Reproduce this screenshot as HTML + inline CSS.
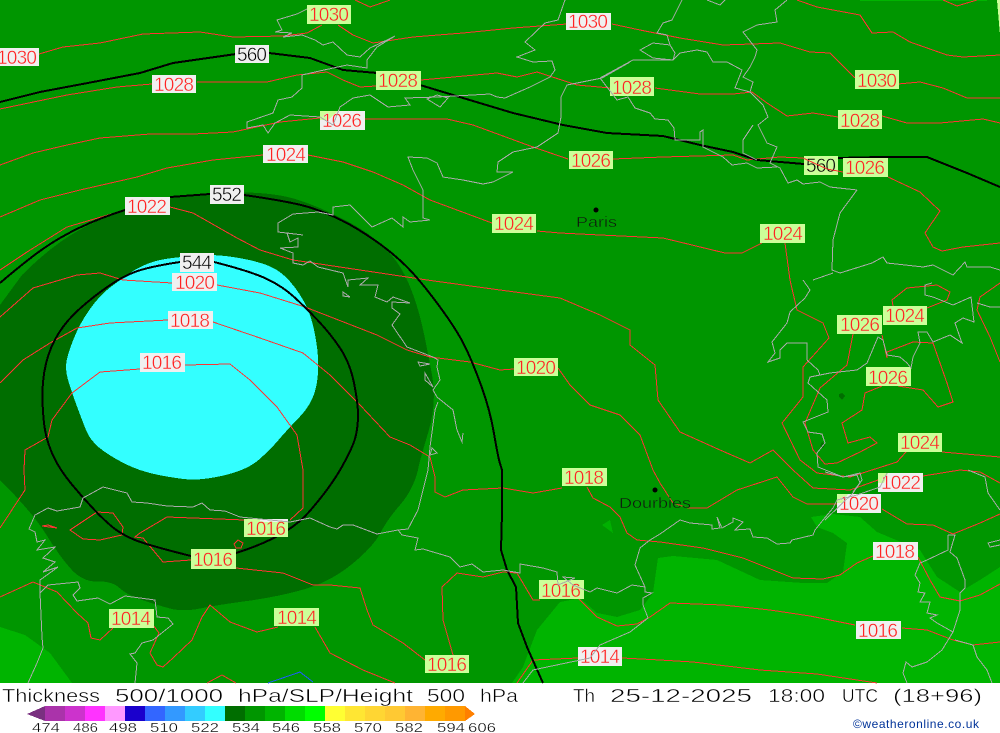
<!DOCTYPE html>
<html><head><meta charset="utf-8"><style>
html,body{margin:0;padding:0;background:#fff}
svg{display:block}
text{font-family:"Liberation Sans",sans-serif}
.r{fill:none;stroke:#ff3333;stroke-width:1}
.k{fill:none;stroke:#000;stroke-width:2}
.c{fill:none;stroke:#aaaaaa;stroke-width:1}
.lg{fill:#ccff99}.wh{fill:#f0f0f0}
.t text{font-size:19px;text-anchor:middle}
.tl text{fill:#ff2222;stroke:#ccff99;stroke-width:.4}
.tw text{fill:#ff2222;stroke:#f0f0f0;stroke-width:.4}
.bl text{fill:#000;stroke:#f0f0f0;stroke-width:.5}
.bg text{fill:#000;stroke:#ccff99;stroke-width:.5}
.title text{font-size:18px;fill:#000;stroke:#fff;stroke-width:.45}
.sc text{font-size:13px;fill:#000;stroke:#fff;stroke-width:.3}
</style></head><body>
<svg width="1000" height="733" viewBox="0 0 1000 733" xmlns="http://www.w3.org/2000/svg">
<rect width="1000" height="733" fill="#fff"/>
<rect width="1000" height="683" fill="#009600"/>
<g shape-rendering="crispEdges">
<path fill="#00b400" d="M512 683L523 667 537 630 560 602 580 598 597 613 617 617 640 610 653 593 658 558 673 556 717 560 760 580 803 583 827 583 843 572 847 543 833 533 817 527 811 517 833 514 860 517 877 532 920 550 937 577 960 592 980 580 1000 567V683Z"/>
<path fill="#00b400" d="M0 627L25 635 50 653 72 683H0Z"/>
<path fill="#00b400" d="M860 0H987V1H860Z"/>
<path fill="#ccff99" d="M997 0H1000V35Z"/>
<path fill="#00b000" d="M602 525L610 520 613 533Z"/>
<path fill="#006e00" d="M0 305L22 275Q50 247 75 232.5Q100 218 133.5 208Q167 198 190 195Q213 192 245 192.5Q277 193 298.5 200Q320 207 345 220Q370 233 385 248Q400 263 408.5 283Q417 303 422 325Q427 347 432 375Q437 403 428.5 431.5Q420 460 419 465L418 470Q413 490 400 505Q387 520 380 533.5Q373 547 351.5 564.5Q330 582 303.5 589.5Q277 597 247 601Q217 605 200 608.5Q183 612 170 608.5Q157 605 142 600Q127 595 119.5 588Q112 581 97.5 581.5Q83 582 71.5 569.5Q60 557 46.5 535Q33 513 0 480Z"/>
<path fill="#33ffff" d="M196.5 255.5Q213 254 233 257Q253 260 266.5 265Q280 270 290 281.5Q300 293 306.5 306.5Q313 320 316.5 343.5Q320 367 316.5 385Q313 403 300 416.5Q287 430 278.5 440Q270 450 258.5 460Q247 470 223.5 475.5Q200 481 183.5 479Q167 477 152 473.5Q137 470 122.5 462.5Q108 455 99 447.5Q90 440 86 430Q82 420 77 406.5Q72 393 68.5 381.5Q65 370 66.5 361.5Q68 353 74 338Q80 323 90 309Q100 295 110 287.5Q120 280 128.5 274Q137 268 147 264Q157 260 168.5 258.5Q180 257 196.5 255.5Z"/>
<path fill="#006e00" d="M839 394l3-1 3 3-3 4-3-3zM822 442l3 3-2 3-3-2z"/>
</g>
<g class="r" shape-rendering="crispEdges">
<path d="M39 54L63 47 100 43 143 34 200 32 233 37 283 36 307 33 322 25M338 25L353 35 373 43 413 37 463 33 513 28 567 24M612 24L640 30 680 38 723 45 780 43 810 52 830 53 855 78M898 84L920 82 943 88 967 98 1000 98"/>
<path d="M355 0L370 7 390 0M797 0L817 7 860 15 872 33 893 32 910 42 947 55 963 57 1000 55M943 0L957 6 977 0"/>
<path d="M0 109L67 95 117 87 152 84M197 82L267 82 297 75 327 72 343 80 360 87 376 86M421 80L497 73 517 77 537 72 577 85 610 88M655 88L700 94 733 94 752 92 767 103 787 116 813 113 838 117M882 116L907 123 940 123 983 119 1000 123"/>
<path d="M0 165L33 153 67 145 100 138 150 134 193 134 233 132 280 122 320 118M365 119L447 119 473 125 533 147 568 159M613 159L663 157 733 155 747 160 780 157 803 158"/>
<path d="M888 177L920 192 940 211 925 233 933 247 942 251 963 247 1000 243"/>
<path d="M0 217L40 200 80 190 137 177 167 168 213 160 263 155M308 155L343 162 373 172 403 185 430 200 492 223M537 231L560 233 600 235 663 238 725 253 742 253 762 243M785 243L790 280 797 310 823 323 829 338 803 367 803 397 782 423 800 460 817 473 850 477 897 462 906 452M942 452L977 455 1000 457"/>
<path d="M0 270L27 252 67 227 125 210M170 207L193 213 237 238 260 250 293 260 360 270 427 280 500 290 560 298 600 315 630 330 630 345 655 365 658 400 680 432 720 450 750 463 773 450 793 470 813 488 850 490 878 480M923 476L960 470 980 472 1000 483"/>
<path d="M0 317L33 288 77 275 100 273 123 280 172 283M217 285L260 293 305 307 377 335 407 350 430 357 470 362 500 370 514 369M558 368L570 385 590 405 620 415 640 435 653 470 660 483 673 503 688 508 707 508 737 490 777 477 793 497 807 504 837 504M882 509L907 524 933 525 953 534 980 523 1000 514"/>
<path d="M0 383L23 360 50 343 77 328 110 323 168 320M213 322L260 338 303 353 330 375 360 405 390 437 410 445 430 457 435 477 435 492 445 497 463 490 503 488 533 493 562 488M587 487L593 498 610 507 620 517 627 533 637 540 660 542 703 548 743 558 793 578 823 579 840 575 857 563 873 556M918 557L930 580 940 597 960 601 980 595 1000 584"/>
<path d="M0 528L25 490 24 470 25 450 48 437 52 420 72 393 100 372 140 369M185 365L230 364 250 380 277 407 297 435 303 470 303 508 290 520M245 520L167 517 140 533 135 537 143 538 163 562 191 560M236 568L283 573 313 585 330 585 360 588 367 610 373 625 403 643 425 660"/>
<path d="M70 530L97 512 113 513 123 527 122 535 100 540 83 539ZM42 526L48 525 57 528ZM234 544L238 540 243 543 241 548 236 548Z"/>
<path d="M0 597L33 582 57 592 77 613 88 623 91 638 100 640 113 628M153 625L159 633 150 653 157 665 163 667 173 658 192 640 202 617 210 605 230 622 257 632 278 627M315 627L330 653 363 670 395 683M207 683L222 675 236 683"/>
<path d="M453 655L443 620 442 587 457 573 483 577 503 572 517 573 533 600 540 600M578 598L597 617 617 626 637 624 650 617 670 603 723 605 770 610 810 616 855 625M902 628L927 630 953 640 973 645 1000 642"/>
<path d="M517 683L533 660 578 658M622 658L660 660 693 662 760 670 817 674 877 683"/>
<path d="M853 334L847 365 820 388 805 423 813 450 825 464 837 463 860 452 877 443 870 437 848 443 842 423 862 410 865 393 882 386M898 386L923 390 938 407 953 402 947 383 933 343 913 342 887 352 887 358 882 335"/>
<path d="M927 308L947 300 950 292 937 285 907 288 892 300 893 306M1000 283L980 297 977 310 990 337 1000 362"/>
</g>
<path d="M268 683L300 672 313 682" fill="none" stroke="#1e5aff" shape-rendering="crispEdges"/>
<g class="k" shape-rendering="crispEdges">
<path d="M0 102L40 92 93 82 140 73 173 63 236 54M269 53L310 58 343 70 377 73 420 85 463 98 513 113 563 125 607 133 663 136 700 145 733 152 757 160 804 164M838 158L880 157 927 157 967 173 1000 187"/>
<path d="M0 283Q27 260 43.5 248.5Q60 237 80 227.5Q100 218 125 210M170 197L210 194M244 195Q293 202 310 207.5Q327 213 342 220.5Q357 228 375 240.5Q393 253 406.5 266.5Q420 280 438.5 305Q457 330 465 346.5Q473 363 481.5 386.5Q490 410 494 433.5Q498 457 500 463.5L502 470 502 513 501 550 507 570 516 587 518 623 527 647 543 683"/>
<path d="M180 262Q147 267 133.5 272.5Q120 278 106.5 287.5Q93 297 80 308.5Q67 320 58.5 333.5Q50 347 46 363.5Q42 380 42.5 400Q43 420 45.5 432.5Q48 445 54 457.5Q60 470 71.5 484Q83 498 95 510.5Q107 523 115 529Q123 535 135 540Q147 545 191 556M236 553Q287 537 308.5 512.5Q330 488 341.5 467.5Q353 447 355.5 437Q358 427 358 415Q358 403 354 383Q350 363 340 348Q330 333 316.5 319Q303 305 293 296Q283 287 268 279.5Q253 272 214 262"/>
</g>
<g class="t">
<g class="lg">
<rect x="307" y="5" width="44" height="19"/><rect x="376" y="71" width="45" height="19"/><rect x="569" y="151" width="44" height="18"/><rect x="610" y="77" width="44" height="19"/><rect x="855" y="70" width="44" height="19"/><rect x="838" y="110" width="44" height="19"/><rect x="843" y="158" width="45" height="19"/><rect x="760" y="224" width="45" height="19"/><rect x="492" y="214" width="44" height="19"/><rect x="514" y="358" width="44" height="18"/><rect x="837" y="315" width="45" height="19"/><rect x="883" y="306" width="44" height="19"/><rect x="866" y="367" width="45" height="19"/><rect x="898" y="433" width="44" height="19"/><rect x="244" y="519" width="44" height="18"/><rect x="191" y="549" width="45" height="20"/><rect x="109" y="609" width="45" height="19"/><rect x="274" y="608" width="45" height="18"/><rect x="562" y="468" width="45" height="18"/><rect x="539" y="580" width="45" height="19"/><rect x="425" y="655" width="44" height="18"/><rect x="804" y="156" width="34" height="19"/>
</g>
<g class="wh">
<rect x="-6" y="48" width="45" height="18"/><rect x="152" y="75" width="44" height="18"/><rect x="566" y="13" width="45" height="17"/><rect x="320" y="111" width="45" height="19"/><rect x="263" y="145" width="45" height="18"/><rect x="125" y="197" width="45" height="18"/><rect x="172" y="273" width="45" height="18"/><rect x="168" y="311" width="45" height="18"/><rect x="140" y="353" width="45" height="19"/><rect x="878" y="473" width="45" height="19"/><rect x="837" y="494" width="44" height="19"/><rect x="578" y="647" width="44" height="19"/><rect x="873" y="542" width="45" height="18"/><rect x="856" y="621" width="45" height="18"/><rect x="235" y="45" width="34" height="18"/><rect x="210" y="185" width="34" height="19"/><rect x="180" y="253" width="34" height="19"/>
</g>
<path class="lg" d="M320 111H338L328 120H320ZM878 473H888L884 483H878ZM837 494H848L842 503H837Z"/>
<rect class="wh" x="260" y="519" width="28" height="3"/>
<g class="tl">
<text x="329" y="21" textLength="40">1030</text><text x="398" y="87" textLength="40">1028</text><text x="591" y="167" textLength="40">1026</text><text x="632" y="94" textLength="40">1028</text><text x="877" y="87" textLength="40">1030</text><text x="860" y="127" textLength="40">1028</text><text x="865" y="174" textLength="40">1026</text><text x="783" y="240" textLength="40">1024</text><text x="514" y="230" textLength="40">1024</text><text x="536" y="374" textLength="40">1020</text><text x="860" y="331" textLength="40">1026</text><text x="905" y="322" textLength="40">1024</text><text x="888" y="384" textLength="40">1026</text><text x="920" y="449" textLength="40">1024</text><text x="266" y="535" textLength="40">1016</text><text x="213" y="566" textLength="40">1016</text><text x="131" y="625" textLength="40">1014</text><text x="297" y="624" textLength="40">1014</text><text x="584" y="484" textLength="40">1018</text><text x="561" y="597" textLength="40">1016</text><text x="447" y="671" textLength="40">1016</text>
</g>
<g class="tw">
<text x="17" y="64" textLength="40">1030</text><text x="174" y="91" textLength="40">1028</text><text x="588" y="28" textLength="40">1030</text><text x="342" y="127" textLength="40">1026</text><text x="286" y="161" textLength="40">1024</text><text x="147" y="213" textLength="40">1022</text><text x="195" y="289" textLength="40">1020</text><text x="190" y="327" textLength="40">1018</text><text x="162" y="369" textLength="40">1016</text><text x="901" y="489" textLength="40">1022</text><text x="859" y="510" textLength="40">1020</text><text x="600" y="663" textLength="40">1014</text><text x="895" y="558" textLength="40">1018</text><text x="878" y="637" textLength="40">1016</text>
</g>
<g class="bl"><text x="252" y="61" textLength="30">560</text><text x="227" y="201" textLength="30">552</text><text x="197" y="269" textLength="30">544</text></g>
<g class="bg"><text x="821" y="172" textLength="30">560</text></g>
</g>
<path class="r" d="M803 158L827 169 843 172" shape-rendering="crispEdges"/>
<g class="c" shape-rendering="crispEdges">
<path d="M307 9L297 14 277 20 282 30 275 32 292 33 283 37 302 35 315 40 323 45 333 42 347 55 360 57 370 48 387 40 395 36 377 47 367 60 367 68 347 65 315 72 302 75 302 88 292 97 278 100 273 113 247 122 247 128 263 125 268 133 275 123 290 115 320 117 333 125 340 107 353 98 370 95 388 107 410 105 405 98 437 97 490 94 497 97 505 98 530 87 550 77 555 70 552 61 533 62 517 57 535 50 525 42 545 23 558 20 565 0"/>
<path d="M427 99L437 95 448 98 440 107Z"/>
<path d="M630 62L602 78 567 85 561 97 561 117 558 133 537 147 513 152 498 162 497 172 513 172 493 182 483 184 463 180 443 177 437 163 427 158 408 157 413 170 423 190 423 218 430 220 410 222 403 217 403 227 392 218 372 227 350 205 333 207 333 215 318 212 293 214 278 223 278 232 303 235 287 233 290 242 298 238 298 247 280 248 293 253 293 263 303 265 310 261 318 267 343 273 348 287 348 280 368 278 360 285 378 285 375 297 387 302 393 297 410 303 392 302 392 308 400 314 392 325 407 347 433 357 438 360 437 367 440 380 433 390 437 397 453 410 457 430 462 442 463 433"/>
<path d="M438 402L435 410 430 447 428 470 418 510 408 529 398 530 377 534 353 525 343 525 337 529 330 527 310 518 290 522 240 517 225 511 210 510 202 503 193 507 167 506 147 503 132 502 127 493 103 487 83 498 80 507 57 511 48 508 35 515 29 529 35 532 37 542 45 540 37 550 55 547 43 558 55 562 43 572 58 567 40 580 40 593 42 637 43 648 37 663 28 683"/>
<path d="M418 362L430 364 420 366ZM425 373L433 387 425 380ZM343 292L350 297 343 296ZM430 455L437 453 432 448Z"/>
<path d="M40 593L48 585 78 582 80 588 73 595 77 601 98 598 110 604 125 596 155 600 157 617 168 618 173 624 153 640 142 643 135 653 130 654 137 663 135 683"/>
<path d="M398 530L402 535 418 538 415 550 423 549 450 557 460 567 472 564 483 572 503 570 520 573 520 564 543 568 557 572 558 585 575 578 563 577 573 585 590 592 597 588 617 593 632 585 645 587 645 592 652 593 643 598 643 605 648 618 630 632 600 645 590 658 547 667 533 670 523 683"/>
<path d="M645 587L635 565 640 548 650 540 660 534 680 520 690 523 712 525 712 529 720 528 717 517 722 528 733 522 733 518 743 522 735 530 750 529 753 537 767 538 777 544 790 543 792 540 813 535 815 530 823 520 833 508 837 500 857 495 880 487 887 473"/>
<path d="M825 520L853 493 860 483 857 475 843 477 818 467 817 453 825 443 822 434 808 432 803 422 828 412 827 400 808 383 810 377 830 373 857 370 867 363 878 337 883 340 887 355 900 357 907 363 911 368 913 357 920 343 918 332 927 332 933 342 950 335 962 343 955 323 963 318 974 322 971 297 953 305 933 297 925 295 925 285 932 283M977 303L990 307 1000 307"/>
<path d="M807 360L807 343 787 343 780 350 780 358 768 362 775 353 772 342 787 323 790 312 805 298 810 290 803 280M807 360L818 370 820 375 830 373"/>
<path d="M857 190L840 213 833 240 832 270 840 273 872 263 883 257 887 263 923 267 933 265 953 275 965 262 967 267 990 267 1000 270M833 273L813 280"/>
<path d="M600 78L633 60 673 60 680 53 697 50 707 52 713 62 727 62 742 70 735 88 750 92 763 105 768 117 758 125 767 143 777 147 770 163 780 168 788 183 797 180 803 184 820 182 830 187 857 190"/>
<path d="M600 78L617 100 628 97 635 108 650 113 655 119 668 120 674 128 675 140 700 140 700 132 703 130 703 147 723 157 732 165 747 163 757 168 777 167"/>
<path d="M682 0L672 20 663 23 657 33 667 35 670 45 675 53 673 60 653 58 640 50 653 43 670 45M707 0L720 5 725 0M787 0L775 10 777 22 757 25 743 32 757 50 755 57 750 67 743 77 753 82 750 92M753 125L743 140 743 153 757 160"/>
<path d="M948 535L955 535 950 552 957 558 965 580 965 588 960 593 960 610 953 632 937 623 930 618 937 615 927 613 930 602 920 602 925 593 918 592 920 583 915 575 920 563 927 560 948 550 948 535"/>
<path d="M953 632L942 650 927 662 912 667 906 662 903 673 907 683M955 640L973 645 977 657 987 670 992 683M1000 540L988 543 990 547 1000 545M968 470L985 477 988 493 1000 510M825 472L843 477 860 473 862 480 853 492"/>
</g>
<circle cx="596" cy="210" r="2.5" fill="#000"/>
<circle cx="655" cy="490" r="2.5" fill="#000"/>
<text x="576" y="227" textLength="41" lengthAdjust="spacingAndGlyphs" font-size="15" fill="#111" stroke="#009600" stroke-width=".45">Paris</text>
<text x="619" y="508" textLength="72" lengthAdjust="spacingAndGlyphs" font-size="15" fill="#111" stroke="#009600" stroke-width=".45">Dourbies</text>
<g shape-rendering="crispEdges">
<path fill="#7a3080" d="M27 714L45 706V721Z"/>
<rect x="45" y="706" width="20" height="15" fill="#aa33aa"/><rect x="65" y="706" width="20" height="15" fill="#cc33cc"/><rect x="85" y="706" width="20" height="15" fill="#ff33ff"/><rect x="105" y="706" width="20" height="15" fill="#ff99ff"/><rect x="125" y="706" width="20" height="15" fill="#1a00cc"/><rect x="145" y="706" width="20" height="15" fill="#3366ff"/><rect x="165" y="706" width="20" height="15" fill="#3399ff"/><rect x="185" y="706" width="20" height="15" fill="#33ccff"/><rect x="205" y="706" width="20" height="15" fill="#33ffff"/><rect x="225" y="706" width="20" height="15" fill="#006e00"/><rect x="245" y="706" width="20" height="15" fill="#009600"/><rect x="265" y="706" width="20" height="15" fill="#00b400"/><rect x="285" y="706" width="20" height="15" fill="#00dc00"/><rect x="305" y="706" width="20" height="15" fill="#00ff00"/><rect x="325" y="706" width="20" height="15" fill="#ffff33"/><rect x="345" y="706" width="20" height="15" fill="#ffe633"/><rect x="365" y="706" width="20" height="15" fill="#ffd633"/><rect x="385" y="706" width="20" height="15" fill="#ffc933"/><rect x="405" y="706" width="20" height="15" fill="#ffb433"/><rect x="425" y="706" width="20" height="15" fill="#ffaa00"/><rect x="445" y="706" width="20" height="15" fill="#ff9900"/>
<path fill="#ff8000" d="M465 706L475 714 465 721Z"/>
</g>
<g class="title">
<text x="2" y="702" textLength="98" lengthAdjust="spacingAndGlyphs">Thickness</text>
<text x="115" y="702" textLength="108" lengthAdjust="spacingAndGlyphs">500/1000</text>
<text x="238" y="702" textLength="175" lengthAdjust="spacingAndGlyphs">hPa/SLP/Height</text>
<text x="427" y="702" textLength="38" lengthAdjust="spacingAndGlyphs">500</text>
<text x="480" y="702" textLength="38" lengthAdjust="spacingAndGlyphs">hPa</text>
<text x="573" y="702" textLength="22" lengthAdjust="spacingAndGlyphs">Th</text>
<text x="610" y="702" textLength="142" lengthAdjust="spacingAndGlyphs">25-12-2025</text>
<text x="768" y="702" textLength="57" lengthAdjust="spacingAndGlyphs">18:00</text>
<text x="842" y="702" textLength="36" lengthAdjust="spacingAndGlyphs">UTC</text>
<text x="893" y="702" textLength="89" lengthAdjust="spacingAndGlyphs">(18+96)</text>
</g>
<g class="sc">
<text x="32" y="732" textLength="28" lengthAdjust="spacingAndGlyphs">474</text><text x="73" y="732" textLength="25" lengthAdjust="spacingAndGlyphs">486</text><text x="109" y="732" textLength="28" lengthAdjust="spacingAndGlyphs">498</text><text x="150" y="732" textLength="28" lengthAdjust="spacingAndGlyphs">510</text><text x="191" y="732" textLength="28" lengthAdjust="spacingAndGlyphs">522</text><text x="232" y="732" textLength="28" lengthAdjust="spacingAndGlyphs">534</text><text x="272" y="732" textLength="28" lengthAdjust="spacingAndGlyphs">546</text><text x="313" y="732" textLength="28" lengthAdjust="spacingAndGlyphs">558</text><text x="354" y="732" textLength="28" lengthAdjust="spacingAndGlyphs">570</text><text x="395" y="732" textLength="28" lengthAdjust="spacingAndGlyphs">582</text><text x="437" y="732" textLength="28" lengthAdjust="spacingAndGlyphs">594</text><text x="468" y="732" textLength="28" lengthAdjust="spacingAndGlyphs">606</text>
</g>
<text x="853" y="728" textLength="126" font-size="12" fill="#003399">©weatheronline.co.uk</text>
</svg>
</body></html>
